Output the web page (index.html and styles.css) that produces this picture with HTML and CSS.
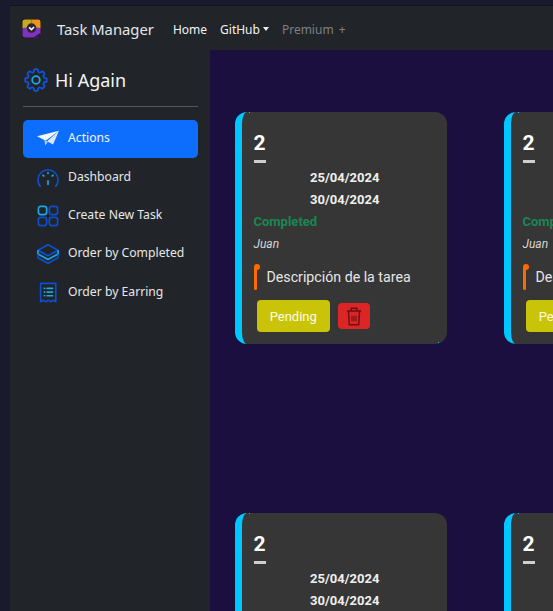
FILE: index.html

```html
<!DOCTYPE html>
<html lang="es">
<head>
  <meta charset="UTF-8" />
  <title>Task Manager</title>
  <meta name="viewport" content="width=device-width, initial-scale=1.0" />
  <link rel="stylesheet" href="styles.css">
</head>
<body>
  <div class="app">
    <nav class="navbar">
      <svg class="brand-logo" viewBox="0 0 20 20">
        <rect width="20" height="20" rx="3" fill="#17121f"/>
        <path d="M.5 3A2.500 2.500 0 0 1 3 .5h7v9H.5z" fill="#c9a81c"/>
        <path d="M10 .5h7A2.500 2.500 0 0 1 19.500 3v7H10z" fill="#e8961a"/>
        <path d="M.5 9.500l9.500-1 9.500 1V17a2.500 2.500 0 0 1-2.500 2.500H3A2.500 2.500 0 0 1 .5 17z" fill="#8233bd"/>
        <path d="M12 19.500l7.500-5V17a2.500 2.500 0 0 1-2.500 2.500z" fill="#2a1c3a"/>
        <circle cx="10" cy="9.500" r="5" fill="#2b2436"/>
        <path d="M7.500 8.800l2.500 2.400 2.700-2.800" fill="none" stroke="#fff" stroke-width="1.600"/>
      </svg>
      <span class="brand">Task Manager</span>
      <a class="nav-link">Home</a>
      <a class="nav-link">GitHub<i class="caret"></i></a>
      <a class="nav-link muted">Premium +</a>
    </nav>

    <div class="content">
      <aside class="sidebar">
        <div class="side-head">
          <svg class="gear" viewBox="2 2 20 20" fill="none" stroke-width="1.500">
            <path stroke="#0d55e0" stroke-linejoin="round" d="M10.343 3.940c.090-.542.560-.940 1.110-.940h1.093c.550 0 1.020.398 1.110.940l.149.894c.070.424.384.764.780.930.398.164.855.142 1.205-.108l.737-.527a1.125 1.125 0 011.450.120l.773.774c.390.389.440 1.002.120 1.450l-.527.737c-.250.350-.272.806-.107 1.204.165.397.505.710.930.780l.893.150c.543.090.940.560.940 1.109v1.094c0 .550-.397 1.020-.940 1.110l-.893.149c-.425.070-.765.383-.930.780-.165.398-.143.854.107 1.204l.527.738c.320.447.269 1.060-.120 1.450l-.774.773a1.125 1.125 0 01-1.449.120l-.738-.527c-.350-.250-.806-.272-1.203-.107-.397.165-.710.505-.781.929l-.149.894c-.090.542-.560.940-1.110.940h-1.094c-.550 0-1.019-.398-1.110-.940l-.148-.894c-.071-.424-.384-.764-.781-.930-.398-.164-.854-.142-1.204.108l-.738.527c-.447.320-1.060.269-1.450-.120l-.773-.774a1.125 1.125 0 01-.120-1.450l.527-.737c.250-.350.273-.806.108-1.204-.165-.397-.505-.710-.930-.780l-.894-.150c-.542-.090-.940-.560-.940-1.109v-1.094c0-.550.398-1.020.940-1.110l.894-.149c.424-.070.765-.383.930-.780.165-.398.143-.854-.108-1.204l-.526-.738a1.125 1.125 0 01.120-1.450l.773-.773a1.125 1.125 0 011.450-.120l.737.527c.350.250.807.272 1.204.107.397-.165.710-.505.780-.929l.150-.894z"/>
            <circle cx="12" cy="12" r="3.200" stroke="#1ca8e0"/>
          </svg>
          <span>Hi Again</span>
        </div>
        <hr class="side-rule" />
        <ul class="menu">
          <li class="menu-item active">
            <svg class="menu-icon" viewBox="0 0 24 24">
              <path d="M0 9L24 3 9.500 14z" fill="#f2f6fb"/>
              <path d="M24 3l-6.500 15-6.500-3.500z" fill="#dbe6f5"/>
              <path d="M8 13l1 6 3-4z" fill="#a9c8f2"/>
            </svg>
            <span>Actions</span>
          </li>
          <li class="menu-item">
            <svg class="menu-icon" viewBox="0 0 24 24" fill="none" stroke-width="1.800" stroke-linecap="round">
              <path stroke="#0d4fd0" d="M3.500 21a11 11 0 1 1 17 0"/>
              <path stroke="#1ca8e0" d="M12 6v1M6.500 9l1 .8M17.500 9l-1 .8M12 15v4"/>
            </svg>
            <span>Dashboard</span>
          </li>
          <li class="menu-item">
            <svg class="menu-icon" viewBox="0 0 24 24" fill="none" stroke-width="1.800">
              <rect x="1.500" y="1.500" width="9" height="9" rx="2.500" stroke="#1ca8e0"/>
              <rect x="13.500" y="1.500" width="9" height="9" rx="2.500" stroke="#0d4fd0"/>
              <rect x="1.500" y="13.500" width="9" height="9" rx="2.500" stroke="#0d4fd0"/>
              <rect x="13.500" y="13.500" width="9" height="9" rx="2.500" stroke="#0d4fd0"/>
            </svg>
            <span>Create New Task</span>
          </li>
          <li class="menu-item">
            <svg class="menu-icon" viewBox="0 0 24 24" fill="none" stroke-width="1.800" stroke-linejoin="round">
              <path stroke="#0d4fd0" d="M12 2l11 6-11 6L1 8z"/>
              <path stroke="#1ca8e0" d="M1 8v4l11 6 11-6V8"/>
              <path stroke="#0d4fd0" d="M1 12v4l11 6 11-6v-4"/>
            </svg>
            <span>Order by Completed</span>
          </li>
          <li class="menu-item">
            <svg class="menu-icon" viewBox="0 0 24 24" fill="none" stroke-width="1.800" stroke-linecap="round">
              <path stroke="#0d4fd0" stroke-linejoin="round" d="M4 1.500h16.500v20l-2.700-1.500-2.800 1.500-2.800-1.500-2.700 1.500-2.800-1.500-2.700 1.500z"/>
              <path stroke="#1ca8e0" d="M8 7h.5M8 11h.5M8 15h.5M11 7h6M11 11h6M11 15h6"/>
            </svg>
            <span>Order by Earring</span>
          </li>
        </ul>
      </aside>

      <main class="board">
        <article class="card">
          <h2 class="card-num">2</h2>
          <div class="card-dates"><p>25/04/2024</p><p>30/04/2024</p></div>
          <p class="card-status">Completed</p>
          <p class="card-owner">Juan</p>
          <p class="card-desc"><i class="pin"></i>Descripción de la tarea</p>
          <div class="card-actions">
            <button class="btn-pending">Pending</button>
            <button class="btn-delete">
              <svg viewBox="0 0 20 24" fill="none" stroke="#6d0f14" stroke-width="1.900">
                <path d="M1 5h18M6.500 5V1.500h7V5M3 5l1 17.500h12l1-17.500"/>
                <path d="M7.500 11v7M10 11v7M12.500 11v7" stroke-width="1.300"/>
              </svg>
            </button>
          </div>
        </article>

        <article class="card">
          <h2 class="card-num">2</h2>
          <div class="card-dates"><p>25/04/2024</p><p>30/04/2024</p></div>
          <p class="card-status">Completed</p>
          <p class="card-owner">Juan</p>
          <p class="card-desc"><i class="pin"></i>Descripción de la tarea</p>
          <div class="card-actions">
            <button class="btn-pending">Pending</button>
          </div>
        </article>

        <article class="card">
          <h2 class="card-num">2</h2>
          <div class="card-dates"><p>25/04/2024</p><p>30/04/2024</p></div>
        </article>

        <article class="card">
          <h2 class="card-num">2</h2>
          <div class="card-dates"><p>25/04/2024</p><p>30/04/2024</p></div>
        </article>
      </main>
    </div>
  </div>
</body>
</html>
```

FILE: styles.css

```css
html, body { height: 100%; overflow: hidden; }
body { margin: 0; background: #191a2c; color: #fff; font-family: "Noto Sans", sans-serif; }
p, h2, ul { margin: 0; padding: 0; }

.app { display: flex; flex-direction: column; height: 606px; margin: 5px 0 0 10px; border-top: 1px solid #14151c; }

.navbar { display: flex; align-items: center; flex: 0 0 44px; box-sizing: border-box; background: #212529; padding: 2px 0 0 12px; font-size: 12px; }
.brand-logo { width: 19px; height: 19px; margin: -2px 16px 0 0; }
.brand { font-size: 14.800px; color: #e4e6e8; margin-right: 19px; }
.nav-link { color: #f2f3f4; margin-right: 13px; }
.nav-link.muted { color: #7d8084; word-spacing: 2px; }
.caret { display: inline-block; margin-left: 3px; vertical-align: 3px; border-top: 4px solid #eee; border-left: 3px solid transparent; border-right: 3px solid transparent; }

.content { display: flex; flex: 1; min-height: 0; }

.sidebar { flex: 0 0 200px; background: #212529; padding: 0 12.500px 0 13px; box-sizing: border-box; }
.side-head { display: flex; align-items: center; gap: 7px; height: 56px; padding: 4px 0 0 1px; box-sizing: border-box; font-size: 18px; color: #f4f5f6; }
.gear { width: 24px; height: 24px; }
.side-rule { margin: 0 0 13px; border: 0; border-top: 1px solid #54585c; }

.menu { list-style: none; display: flex; flex-direction: column; }
.menu-item { display: flex; align-items: center; gap: 9px; height: 38.400px; padding-left: 14px; border-radius: 5px; font-size: 12.200px; color: #e6e8ea; }
.menu-item span { padding-bottom: 3px; }
.menu-item.active { background: #0d6efd; color: #eef4ff; }
.menu-icon { width: 22px; height: 22px; }

.board { flex: 1; min-width: 0; overflow: hidden; background: #1a0f3e; padding: 62px 0 0 25px; display: grid; grid-template-columns: 212px 212px; grid-auto-rows: 232px; column-gap: 57px; row-gap: 169px; }

.card { position: relative; box-sizing: border-box; width: 212px; height: 232px; background: #363636; border-left: 7px solid #00c8ff; border-radius: 12px; padding: 20px 0 0 11.500px; font-family: Roboto, sans-serif; }
.card::before { content: ""; position: absolute; left: 7px; top: 0; width: 1px; height: 1px; background: #00c8ff; }
.card::after { content: ""; position: absolute; right: 8px; bottom: 1px; width: 1px; height: 1px; background: #00c8ff; }
.card-num { position: relative; width: 24px; font-size: 21px; font-weight: 700; line-height: 23px; padding-bottom: 7px; }
.card-num::after { content: ""; position: absolute; left: 0; bottom: -1px; width: 12px; height: 3px; background: #cfcfcf; }
.card-dates { width: 182.500px; text-align: center; font-size: 13px; font-weight: 700; color: #efefef; line-height: 21.600px; margin-top: 5px; white-space: nowrap; }
.card-status { margin-top: 1px; font-size: 13px; font-weight: 700; color: #198754; line-height: 22px; }
.card-owner { font-size: 12px; font-style: italic; color: #d6d6d6; line-height: 22px; }
.card-desc { display: flex; align-items: center; font-size: 14.200px; color: #e6e6e6; height: 26px; margin-top: 9px; white-space: nowrap; }
.pin { position: relative; flex: none; width: 3px; height: 23px; margin: 3px 10px 0 0; background: #ff6a00; border-radius: 2px; }
.pin::before { content: ""; position: absolute; left: 0; top: -3px; width: 6px; height: 6px; border-radius: 50%; background: #ff6a00; }
.card-actions { display: flex; align-items: center; gap: 8px; margin: 10px 0 0 3.500px; }
.btn-pending { width: 72.500px; height: 32px; border: 0; border-radius: 4px; background: #c9c408; color: #fbfbe8; font: 13px Roboto, sans-serif; }
.btn-delete { display: flex; align-items: center; justify-content: center; width: 32px; height: 26px; padding: 0; border: 0; border-radius: 4px; background: #dc2626; }
.btn-delete svg { width: 16px; height: 19px; }
```
